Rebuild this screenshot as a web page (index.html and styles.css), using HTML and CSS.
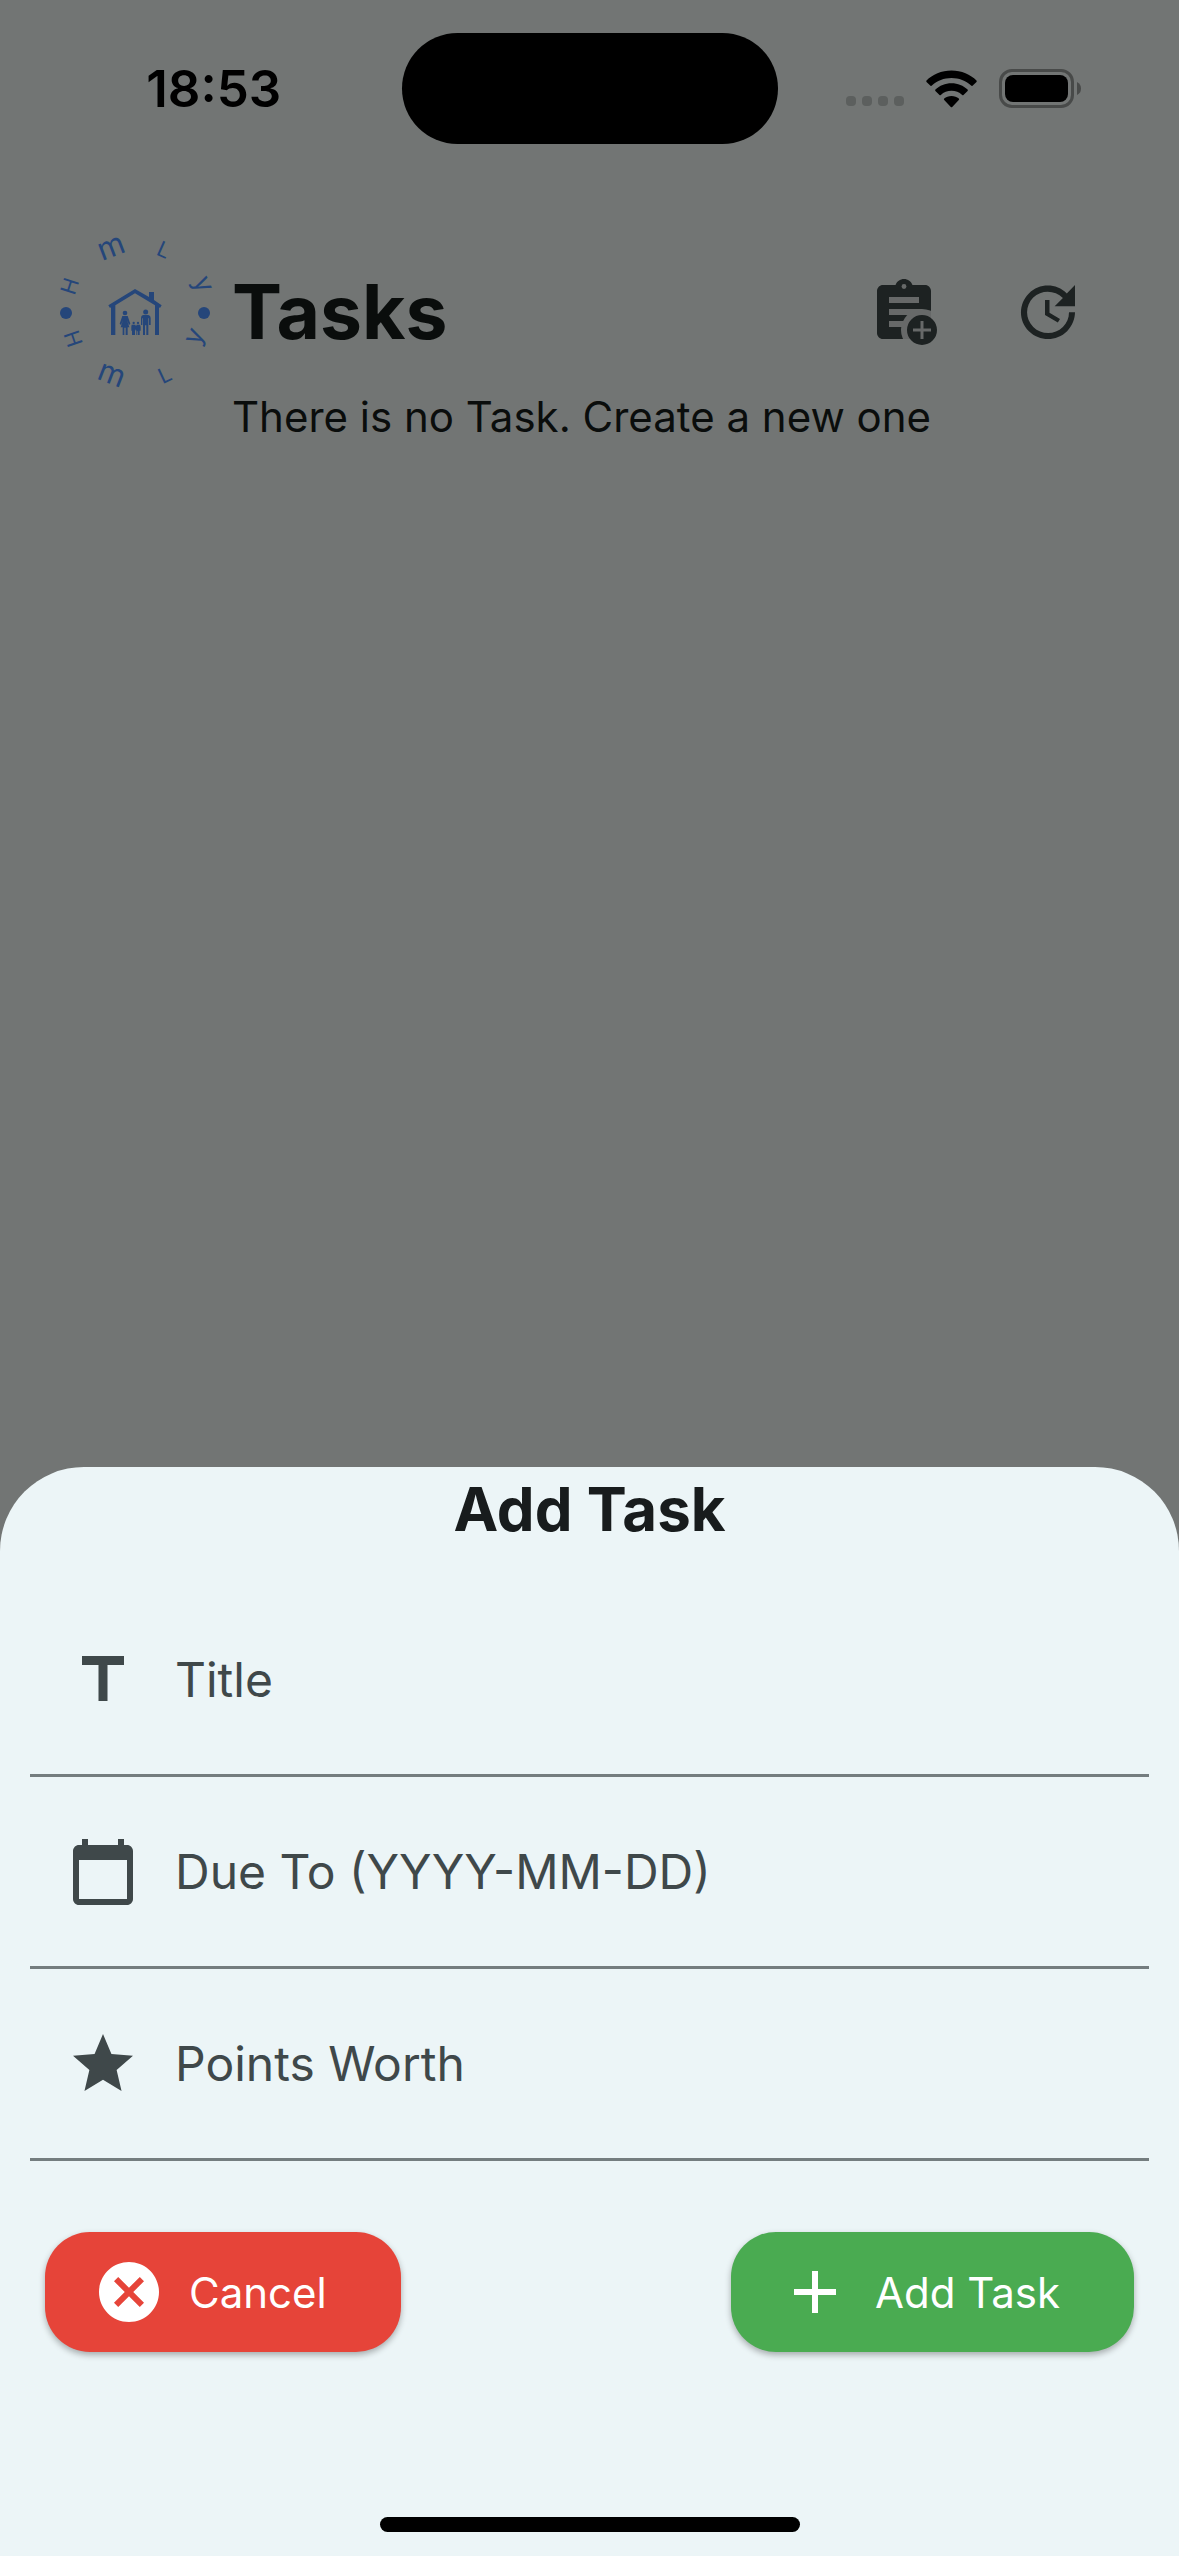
FILE: index.html
```html
<!DOCTYPE html>
<html lang="en">
<head>
<meta charset="utf-8">
<meta name="viewport" content="width=device-width, initial-scale=1">
<title>Tasks</title>
<link rel="stylesheet" href="styles.css">
</head>
<body>
<div class="screen">
  <div class="status">
    <time class="clock">18:53</time>
    <div class="island"></div>
    <div class="indicators">
      <svg class="signal" width="58" height="10" viewBox="0 0 58 10" aria-hidden="true">
        <rect width="10" height="10" rx="4"/><rect x="16" width="10" height="10" rx="4"/><rect x="32" width="10" height="10" rx="4"/><rect x="48" width="10" height="10" rx="4"/>
      </svg>
      <svg width="51" height="38" viewBox="0 0 51 38" aria-hidden="true">
        <path d="M25.500 0.500C35.500 .5 44.500 4.500 50.500 10.500Q51 11.200 50.500 11.900L46.500 15.700Q45.800 16.200 45.100 15.600C39.800 10.700 33 8 25.500 8S11.200 10.700 5.900 15.600Q5.200 16.200 4.500 15.700L.5 11.900Q0 11.200 .5 10.500C6.500 4.500 15.500 .5 25.500 .5z"/>
        <path d="M25.500 13.300C31.800 13.300 37.400 15.700 41.600 19.600Q42.200 20.300 41.600 21L37.500 24.900Q36.900 25.400 36.200 24.900C33.200 22.300 29.600 20.800 25.500 20.800S17.800 22.300 14.800 24.900Q14.100 25.400 13.500 24.900L9.400 21Q8.800 20.300 9.400 19.600C13.600 15.700 19.200 13.300 25.500 13.300z"/>
        <path d="M25.500 26C28.400 26 30.900 27 32.800 28.500Q33.500 29.300 32.800 30L26.200 37Q25.500 37.600 24.800 37L18.200 30Q17.500 29.300 18.200 28.500C20.100 27 22.600 26 25.500 26z"/>
      </svg>
      <svg width="82" height="39" viewBox="0 0 82 39" aria-hidden="true">
        <rect x="1.500" y="1.500" width="72" height="36" rx="11.500" fill="none" stroke="#484a49" stroke-width="3"/>
        <rect x="6" y="6" width="63" height="27" rx="8"/>
        <path d="M78 13q4 2 4 6.500t-4 6.500z" fill="#484a49"/>
      </svg>
    </div>
  </div>

  <header class="header">
    <svg class="logo" viewBox="60 42 450 468" role="img" aria-label="Homely">
      <g class="logo-letters">
        <text transform="translate(89 198) rotate(-72)" y="23" font-size="64">H</text>
        <text transform="translate(214 84) rotate(-21)" y="26" font-size="92">m</text>
        <text transform="translate(372 89) rotate(24)" y="23" font-size="64">L</text>
        <text transform="translate(478 198) rotate(66)" y="12" font-size="80">y</text>
        <text transform="translate(99 356) rotate(71)" y="23" font-size="64">H</text>
        <text transform="translate(214 466) rotate(21)" y="26" font-size="92">m</text>
        <text transform="translate(374 464) rotate(-25)" y="23" font-size="64">L</text>
        <text transform="translate(474 354) rotate(-65)" y="12" font-size="80">y</text>
      </g>
      <circle cx="78" cy="279" r="18"/><circle cx="492" cy="279" r="18"/>
      <path d="M285 207 327 231V216H342V240L365 256 360 264 357 262V345H345V256L285 220 226 256V345H213V262L210 264 205 256z"/>
      <circle cx="255" cy="279" r="7"/>
      <path d="M247 288H263L271 311 267 315 261 300 268 322H263V345H257V323H253V345H248V322H242L249 300 243 315 239 311z"/>
      <circle cx="317" cy="276" r="7.500"/>
      <path d="M309 285H325Q332 286 332 294V315H327V295H325V345H319V316H315V345H309V295H307V315H303V294Q303 286 309 285z"/>
      <circle cx="281" cy="309" r="3.500"/><circle cx="294" cy="309" r="3.500"/>
      <path d="M275 314H286L288 319 290 314H300L302 320V332H299V345H294V334H292V345H289V332L287 328 285 334V345H276V332H274V320z"/>
    </svg>
    <h1 class="title">Tasks</h1>
    <div class="actions">
      <button class="icon-button" type="button" aria-label="New task">
        <svg class="icon" viewBox="0 0 24 24" aria-hidden="true">
          <mask id="board"><path fill="#fff" d="M0 0h24v24H0z"/><path d="M7 7h10v2H7zM7 11h11v2H7zM7 15h8v2H7z"/><circle cx="12" cy="3.500" r=".8"/><circle cx="18" cy="18" r="7"/></mask>
          <path mask="url(#board)" d="M5 3h4.180C9.600 1.840 10.700 1 12 1s2.400.84 2.820 2H19c1.100 0 2 .9 2 2v14c0 1.100-.9 2-2 2H5c-1.100 0-2-.9-2-2V5c0-1.100.9-2 2-2z"/>
          <path fill-rule="evenodd" d="M18 13a5 5 0 1 0 0 10 5 5 0 0 0 0-10zM17.500 15h1v2.500H21v1h-2.500V21h-1v-2.500H15v-1h2.500z"/>
        </svg>
      </button>
      <button class="icon-button" type="button" aria-label="Refresh">
        <svg class="icon" viewBox="0 0 24 24" aria-hidden="true"><path d="M21 10.120h-6.780l2.740-2.820c-2.730-2.700-7.150-2.800-9.880-.1-2.730 2.710-2.730 7.080 0 9.790s7.150 2.710 9.880 0C18.320 15.650 19 14.080 19 12.100h2c0 1.980-.88 4.550-2.640 6.290-3.510 3.480-9.210 3.480-12.720 0-3.500-3.470-3.530-9.110-.02-12.580s9.140-3.470 12.650 0L21 3v7.120zM12.500 8v4.250l3.500 2.080-.72 1.210L11 13V8h1.500z"/></svg>
      </button>
    </div>
    <p class="empty">There is no Task. Create a new one</p>
  </header>

  <form class="sheet">
    <h2 class="sheet-title">Add Task</h2>
    <div class="fields">
      <label class="field">
        <svg class="icon" viewBox="0 0 24 24" aria-hidden="true"><path d="M5 4v3h5.500v12h3V7H19V4z"/></svg>
        <span>Title</span>
        <input class="input" type="text" name="title">
      </label>
      <label class="field">
        <svg class="icon" viewBox="0 0 24 24" aria-hidden="true"><path d="M20 3h-1V1h-2v2H7V1H5v2H4c-1.100 0-2 .9-2 2v16c0 1.100.9 2 2 2h16c1.100 0 2-.9 2-2V5c0-1.100-.9-2-2-2zm0 18H4V8h16v13z"/></svg>
        <span>Due To (YYYY-MM-DD)</span>
        <input class="input" type="text" name="due">
      </label>
      <label class="field">
        <svg class="icon" viewBox="0 0 24 24" aria-hidden="true"><path d="M12 17.270 18.180 21l-1.640-7.030L22 9.240l-7.190-.61L12 2 9.190 8.630 2 9.240l5.460 4.730L5.820 21z"/></svg>
        <span>Points Worth</span>
        <input class="input" type="text" name="points">
      </label>
    </div>
    <div class="buttons">
      <button class="button cancel" type="button">
        <svg class="icon" viewBox="0 0 24 24" aria-hidden="true"><path d="M12 2C6.470 2 2 6.470 2 12s4.470 10 10 10 10-4.470 10-10S17.530 2 12 2zm5 13.590L15.590 17 12 13.410 8.410 17 7 15.590 10.590 12 7 8.410 8.410 7 12 10.590 15.590 7 17 8.410 13.410 12 17 15.590z"/></svg>
        Cancel
      </button>
      <button class="button add" type="button">
        <svg class="icon" viewBox="0 0 24 24" aria-hidden="true"><path d="M19 13h-6v6h-2v-6H5v-2h6V5h2v6h6v2z"/></svg>
        Add Task
      </button>
    </div>
    <div class="home-bar"></div>
  </form>
</div>
</body>
</html>
```

FILE: styles.css
```css
* {
  box-sizing: border-box;
}

body {
  margin: 0;
  background: #727574;
  font-family: Inter, "Liberation Sans", sans-serif;
  font-size: 42px;
  color: #0a0d0c;
}

h1,
h2,
p {
  margin: 0;
}

button {
  border: 0;
  font: inherit;
  color: inherit;
}

.screen {
  display: flex;
  flex-direction: column;
  min-height: 100vh;
}

.icon {
  display: block;
  flex: none;
  width: 72px;
  height: 72px;
  fill: currentColor;
}

/* Status bar */
.status {
  display: grid;
  grid-template-columns: 1fr 376px 1fr;
  align-items: center;
  height: 177px;
  color: #000;
}

.clock {
  padding-left: 26px;
  font-size: 51px;
  font-weight: 600;
  line-height: 60px;
  text-align: center;
}

.island {
  height: 111px;
  border-radius: 56px;
  background: #000;
}

.indicators {
  display: flex;
  align-items: center;
  justify-content: flex-end;
  gap: 22px;
  padding-right: 98px;
}

.signal {
  align-self: flex-end;
  margin-bottom: 2px;
  fill: #5c5f5e;
}

/* Page header */
.header {
  display: grid;
  grid-template-columns: 150px 1fr auto;
  column-gap: 22px;
  align-items: center;
  padding: 57px 59px 0 60px;
}

.logo {
  display: block;
  width: 150px;
  height: 156px;
  overflow: visible;
  fill: #25467a;
}

.logo-letters {
  text-anchor: middle;
}

.title {
  font-size: 75px;
  font-weight: 700;
  line-height: 90px;
}

.actions {
  display: flex;
}

.icon-button {
  padding: 36px;
  background: none;
  color: #1d2222;
}

.empty {
  grid-column: 2 / -1;
  line-height: 54px;
}

/* Bottom sheet */
.sheet {
  margin-top: auto;
  padding-bottom: 24px;
  border-radius: 84px 84px 0 0;
  background: #ecf5f7;
}

.sheet-title {
  font-size: 60px;
  font-weight: 700;
  line-height: 84px;
  text-align: center;
  color: #181c1d;
}

.fields {
  padding: 34px 30px 71px;
}

.field {
  display: flex;
  align-items: center;
  gap: 36px;
  height: 192px;
  padding-left: 37px;
  border-bottom: 3px solid #747d7f;
  font-size: 48px;
  color: #3f484a;
}

.input {
  flex: 1;
  min-width: 0;
  border: 0;
  outline: 0;
  background: none;
  font: inherit;
  color: inherit;
}

.buttons {
  display: flex;
  justify-content: space-between;
  padding: 0 45px;
}

.button {
  display: flex;
  align-items: center;
  gap: 24px;
  height: 120px;
  padding: 0 74px 0 48px;
  border-radius: 45px;
  box-shadow: 0 3px 6px rgba(0, 0, 0, 0.3);
  color: #fff;
}

.cancel {
  background: #e64439;
}

.add {
  background: #4aab51;
}

.home-bar {
  width: 420px;
  height: 15px;
  margin: 165px auto 0;
  border-radius: 8px;
  background: #000;
}
```
